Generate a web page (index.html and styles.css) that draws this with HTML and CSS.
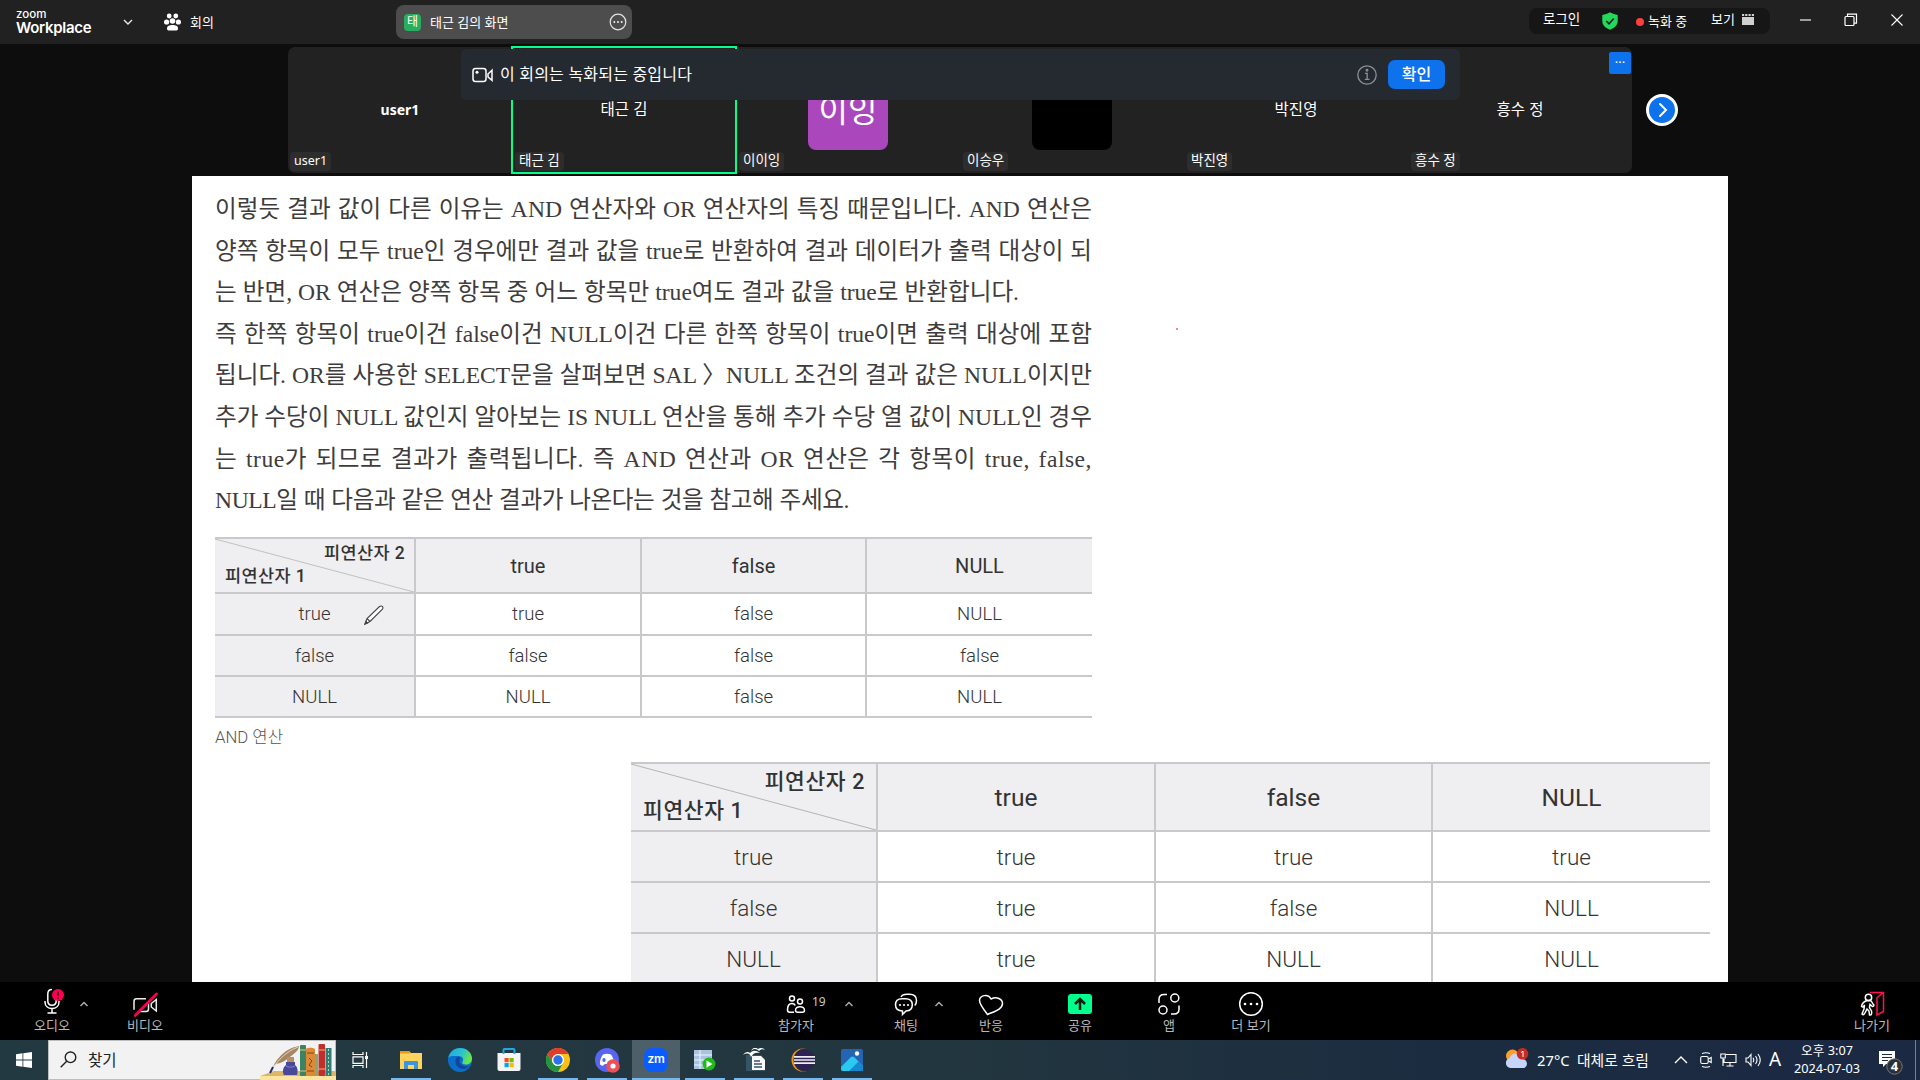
FILE: index.html
```html
<!DOCTYPE html>
<html lang="ko">
<head>
<meta charset="utf-8">
<title>Zoom Workplace</title>
<link rel="stylesheet" href="styles.css">
</head>
<body>
<header class="topbar">
  <div class="logo"><span class="logo-zoom">zoom</span><span class="logo-work">Workplace</span></div>
  <svg class="top-chev" width="10" height="6" viewBox="0 0 10 6" fill="none" stroke="#e8e8e8" stroke-width="1.4"><path d="M1 1l4 4 4-4"/></svg>
  <svg class="top-people" width="17" height="18" viewBox="0 0 17 18" fill="#fff"><circle cx="5.2" cy="3" r="2.4"/><circle cx="11.8" cy="3" r="2.4"/><circle cx="2.6" cy="9" r="2.6"/><circle cx="14.4" cy="9" r="2.6"/><circle cx="8.5" cy="8" r="2.8"/><path d="M3 15.500c0-2.700 2.500-3.500 5.500-3.500s5.500.8 5.500 3.500c0 1.500-.8 2-2 2h-7c-1.200 0-2-.5-2-2z"/></svg>
  <span class="top-meet">회의</span>
  <div class="share-tab">
    <span class="share-badge">태</span><span class="share-name">태근 김의 화면</span>
    <svg width="18" height="18" viewBox="0 0 18 18" fill="none" stroke="#e4e4e4" stroke-width="1.200"><circle cx="9" cy="9" r="7.800"/><g fill="#eee" stroke="none"><circle cx="5.300" cy="9" r="1"/><circle cx="9" cy="9" r="1"/><circle cx="12.700" cy="9" r="1"/></g></svg>
  </div>
  <div class="status">
    <span class="st-login">로그인</span>
    <svg class="st-shield" width="16" height="18" viewBox="0 0 16 18"><path d="M8 .3c2.500 1.700 5 2.400 7.700 2.600v6.300c0 4-3.500 7-7.700 8.500C3.800 16.200.3 13.200.3 9.200V2.900C3 2.700 5.500 2 8 .3z" fill="#23d959"/><path d="M4.300 9l2.700 2.800L11.800 6.500" fill="none" stroke="#123" stroke-width="1.700"/></svg>
    <i class="rec-dot"></i><span class="st-rec">녹화 중</span>
    <span class="st-view">보기</span>
    <svg class="st-grid" width="12" height="11" viewBox="0 0 12 11" fill="#d0d0d0"><path d="M0 3h12v8H0zM0 0h2.200v2H0zM3.200 0h2.200v2H3.200zM6.500 0h2.200v2H6.500zM9.800 0H12v2H9.800z"/></svg>
  </div>
  <svg class="win-min" width="12" height="12" viewBox="0 0 12 12"><path d="M0 6h11" stroke="#c8c8c8" stroke-width="1.500"/></svg>
  <svg class="win-max" width="14" height="14" viewBox="0 0 14 14" fill="none" stroke="#fff" stroke-width="1.200"><rect x="1" y="3.500" width="9" height="9" rx="1"/><path d="M3.500 3.500V1.200h9v9H10"/></svg>
  <svg class="win-close" width="12" height="12" viewBox="0 0 12 12"><path d="M.5.500l11 11M11.500.500l-11 11" stroke="#fff" stroke-width="1.100"/></svg>
</header>

<section class="gallery">
  <div class="tiles">
    <div class="tile"><b>user1</b><span class="tag">user1</span></div>
    <div class="tile active"><span>태근 김</span><span class="tag">태근 김</span></div>
    <div class="tile"><div class="avatar purple">이잉</div><span class="tag">이이잉</span></div>
    <div class="tile"><div class="avatar black"></div><span class="tag">이승우</span></div>
    <div class="tile"><span>박진영</span><span class="tag">박진영</span></div>
    <div class="tile"><span>흥수 정</span><span class="tag">흥수 정</span><span class="tile-more">···</span></div>
  </div>
  <div class="next"><svg width="14" height="18" viewBox="0 0 14 18" fill="none" stroke="#fff" stroke-width="2" stroke-linecap="round"><path d="M5 3l6 6-6 6"/></svg></div>
  <div class="banner">
    <svg width="21" height="16" viewBox="0 0 21 16" fill="none" stroke="#fff" stroke-width="1.500"><rect x="1" y="1.500" width="13" height="13" rx="2.500"/><circle cx="5" cy="5.300" r="1.500" fill="#fff" stroke="none"/><path d="M16 7l4-3.700v10L16 10z"/></svg>
    <span class="banner-text">이 회의는 녹화되는 중입니다</span>
    <svg class="info" width="20" height="20" viewBox="0 0 20 20" fill="none" stroke="#8b8f95" stroke-width="1.300"><circle cx="10" cy="10" r="9.200"/><path d="M8 8.300h2.200v6M7.800 14.400h4.700"/><circle cx="10" cy="5.300" r=".8" fill="#8b8f95"/></svg>
    <span class="ok">확인</span>
  </div>
</section>

<main class="doc">
  <div class="para">
    <p>이렇듯 결과 값이 다른 이유는 AND 연산자와 OR 연산자의 특징 때문입니다. AND 연산은</p>
    <p>양쪽 항목이 모두 true인 경우에만 결과 값을 true로 반환하여 결과 데이터가 출력 대상이 되</p>
    <p class="w3">는 반면, OR 연산은 양쪽 항목 중 어느 항목만 true여도 결과 값을 true로 반환합니다.</p>
    <p>즉 한쪽 항목이 true이건 false이건 NULL이건 다른 한쪽 항목이 true이면 출력 대상에 포함</p>
    <p>됩니다. OR를 사용한 SELECT문을 살펴보면 SAL 〉NULL 조건의 결과 값은 NULL이지만</p>
    <p>추가 수당이 NULL 값인지 알아보는 IS NULL 연산을 통해 추가 수당 열 값이 NULL인 경우</p>
    <p class="w7">는 true가 되므로 결과가 출력됩니다. 즉 AND 연산과 OR 연산은 각 항목이 true, false,</p>
    <p class="w8">NULL일 때 다음과 같은 연산 결과가 나온다는 것을 참고해 주세요.</p>
  </div>
  <div class="truth t1">
    <div class="corner"><svg viewBox="0 0 200 54" preserveAspectRatio="none"><path d="M0 0L200 54" stroke="#bfbfc1" stroke-width="1"/></svg><span class="op2">피연산자 2</span><span class="op1">피연산자 1</span></div>
    <div class="h">true</div><div class="h">false</div><div class="h">NULL</div>
    <div class="r">true</div><div>true</div><div>false</div><div>NULL</div>
    <div class="r">false</div><div>false</div><div>false</div><div>false</div>
    <div class="r">NULL</div><div>NULL</div><div>false</div><div>NULL</div>
  </div>
  <div class="caption">AND 연산</div>
  <div class="truth t2">
    <div class="corner"><svg viewBox="0 0 246 68" preserveAspectRatio="none"><path d="M0 0L246 68" stroke="#b2b2b4" stroke-width="1"/></svg><span class="op2">피연산자 2</span><span class="op1">피연산자 1</span></div>
    <div class="h">true</div><div class="h">false</div><div class="h">NULL</div>
    <div class="r">true</div><div>true</div><div>true</div><div>true</div>
    <div class="r">false</div><div>true</div><div>false</div><div>NULL</div>
    <div class="r">NULL</div><div>true</div><div>NULL</div><div>NULL</div>
  </div>
  <svg class="pencil" width="20" height="20" viewBox="0 0 20 20" fill="#fff" stroke="#444" stroke-width="1.100"><path d="M1 19l2-5.500L15.500 1.500q2-1 3 .2t-.3 2.800L6 16.500zM3 13.500l3 3"/><path d="M1 19l1-2.500 1.500 1.500z" fill="#333"/></svg>
  <i class="laser"></i>
</main>

<nav class="toolbar">
  <div class="tool audio"><svg width="24" height="28" viewBox="0 0 24 28" fill="none" stroke="#fff" stroke-width="1.500"><path d="M12 2.500c-3 0-4.200 2-4.200 4.500v7c0 2.500 1.700 4.200 4.200 4.200s4.200-1.700 4.200-4.200v-2M5 14v1c0 4 3 6.500 7 6.500s7-2.500 7-6.500v-1M12 21.500V26M7.500 26h9"/><circle cx="18" cy="8" r="6" fill="#ff0050" stroke="none"/><path d="M18 4.500v4.500M18 10.300v1.700" stroke="#400018" stroke-width="1.700"/></svg><span>오디오</span></div>
  <svg class="chev" width="24" height="8" viewBox="0 0 24 8" fill="none" stroke="#aaa" stroke-width="1.500"><path d="M8.500 6L12 2.500 15.500 6"/></svg>
  <div class="tool video"><svg width="26" height="28" viewBox="0 0 26 28" fill="none" stroke="#eee" stroke-width="1.500"><path d="M14 8.800H4.500a2.500 2.500 0 0 0-2.500 2.500v8.500M7.500 21.500H14a2.500 2.500 0 0 0 2.500-2.500v-6.500M24.300 9.500v11.500l-5-4v-3.500z"/><path d="M3.200 25.500L24.500 4" stroke="#ff0050" stroke-width="2.600" stroke-linecap="round"/></svg><span>비디오</span></div>

  <div class="tool people"><svg width="24" height="28" viewBox="0 0 24 28" fill="none" stroke="#fff" stroke-width="1.500"><circle cx="8" cy="8.500" r="2.500"/><circle cx="16" cy="11.500" r="2.500"/><path d="M10 22.200H5.500C4 22.200 3.500 21.500 3.500 20c0-4 1.500-6.500 4.500-6.500 1.700 0 2.700.8 3.300 2"/><path d="M13.500 22.200c-1.500 0-2-.7-2-2 0-2 2-3.500 4.500-3.500s4.500 1.500 4.500 3.500c0 1.300-.5 2-2 2z"/></svg><em>19</em><span>참가자</span></div>
  <svg class="chev c2" width="24" height="8" viewBox="0 0 24 8" fill="none" stroke="#aaa" stroke-width="1.500"><path d="M8.500 6L12 2.500 15.500 6"/></svg>
  <div class="tool chat"><svg width="26" height="28" viewBox="0 0 26 28" fill="none" stroke="#fff" stroke-width="1.500"><path d="M8 7c1-2 3-2.800 6-2.800h2.500c4.500 0 7 2.300 7 6.300 0 2.300-.5 4-1.800 5"/><path d="M9 8.800h3.500c4.500 0 6.800 2.200 6.800 6s-2.300 6-6.300 6.200L9.500 24.500V21C5 21 2.500 18.500 2.500 14.800S4.700 8.800 9 8.800z"/><g fill="#fff" stroke="none"><circle cx="7" cy="15" r="1.100"/><circle cx="11" cy="15" r="1.100"/><circle cx="15" cy="15" r="1.100"/></g></svg><span>채팅</span></div>
  <svg class="chev c3" width="24" height="8" viewBox="0 0 24 8" fill="none" stroke="#aaa" stroke-width="1.500"><path d="M8.500 6L12 2.500 15.500 6"/></svg>
  <div class="tool react"><svg width="26" height="28" viewBox="0 0 26 28" fill="none" stroke="#fff" stroke-width="1.500"><path d="M9.500 24.500C4.500 18 1.500 14 1.500 10.500c0-5 8.500-7.500 11.500-1.500 5.500-3 11.500 0 11.500 4.500 0 5.500-7 7.500-15 11z" stroke-linejoin="round"/></svg><span>반응</span></div>
  <div class="tool share"><svg width="24" height="28" viewBox="0 0 24 28"><rect y="4" width="24" height="20" rx="3" fill="#00ff8c"/><path d="M12 20V9.500M7 14l5-5 5 5" fill="none" stroke="#00180d" stroke-width="2.500"/></svg><span>공유</span></div>
  <div class="tool apps"><svg width="24" height="28" viewBox="0 0 24 28" fill="none" stroke="#fff" stroke-width="1.500"><circle cx="17.800" cy="8" r="4"/><circle cx="6" cy="20" r="4"/><path d="M2 13V9.500c0-3 2-5 5-5h3M22 15.500V19c0 3-2 5-5 5h-3"/></svg><span>앱</span></div>
  <div class="tool more"><svg width="26" height="28" viewBox="0 0 26 28" fill="none" stroke="#fff" stroke-width="1.500"><circle cx="13" cy="14" r="11.300"/><g fill="#fff" stroke="none"><circle cx="7" cy="14" r="1.300"/><circle cx="13" cy="14" r="1.300"/><circle cx="19" cy="14" r="1.300"/></g></svg><span>더 보기</span></div>

  <div class="tool leave"><svg width="26" height="28" viewBox="0 0 26 28" fill="none" stroke="#fff" stroke-width="1.500"><circle cx="9.500" cy="7.500" r="3.200"/><path d="M8 10.500c-3 1-5 3-5.500 6 1.500 1 2 0 3-1.500L5 19l-2 5c1.500 1.500 2.500 0 3.500-2L8 19l2 2 .5 4c2 .5 2.500-1 2-4l-2-3.500.5-3 2.500 2c1.500 0 2-1.500.5-2.500-1-2-1.500-3-3-3.800z"/><path d="M11 2.500h13.500v19L18 25V7.500l6.500-5M18 7.500V25" stroke="#ff1050"/></svg><span>나가기</span></div>
</nav>

<footer class="taskbar">
  <div class="start"><svg width="16" height="16" viewBox="0 0 16 16" fill="#fff"><path d="M0 2.200L6.500 1.300v6.300H0zM7.300 1.200L16 0v7.600H7.300zM0 8.400h6.500v6.300L0 13.800zM7.300 8.400H16V16l-8.700-1.200z"/></svg></div>
  <div class="search">
    <svg class="glass" width="17" height="17" viewBox="0 0 17 17" fill="none" stroke="#222" stroke-width="1.400"><circle cx="10.500" cy="6.300" r="5.300"/><path d="M6.700 10.200L.7 16.200"/></svg>
    <span>찾기</span>
    <svg class="art" width="76" height="36" viewBox="0 0 76 36"><path d="M0 32l14-5h62v5z" fill="#dcb765"/><path d="M0 32h76v4H0z" fill="#fde5a0"/>
      <path d="M10 29C14 19 22 5 39 2c0 6-9 10-13 14-4 3-8 3-12 5z" fill="#a58768"/><path d="M10 29C16 18 25 8 38 3" stroke="#ead2ae" fill="none"/><path d="M10 29l3-6" stroke="#2b2c65" stroke-width="2"/>
      <rect x="27" y="13" width="7" height="6" fill="#be8f61"/><path d="M26 18h9v3c3 2 3 7 2 10H24c-2-3-1-8 2-10z" fill="#484a99"/><path d="M26 22c4 2 6 1 9 0" stroke="#8282c4" fill="none"/>
      <rect x="40" y="1" width="6" height="31" rx="1" fill="#3b8463"/><path d="M40 6h6M40 27h6" stroke="#ddc875"/><path d="M46 5c3-2 7-1 9 0v27h-9z" fill="#dd8935"/><path d="M47 9h7M47 27h7M49 14l3 3-3 4 3 2" stroke="#814419" fill="none"/><rect x="55" y="10" width="3" height="22" fill="#84aa74"/><rect x="58.500" width="6.500" height="32" rx="1" fill="#c22e2d"/><path d="M59 6h6M59 25h6" stroke="#f0b766"/><rect x="65.500" y="4" width="6" height="28" fill="#2c7f78"/><path d="M68.500 5v26" stroke="#b4d2b2" stroke-dasharray="2 2"/></svg>
  </div>
  <div class="task"><svg width="16" height="16" viewBox="0 0 16 16" fill="none" stroke="#fff" stroke-width="1.200"><path d="M1 0v2.500h10V0M1 16v-2.500h10V16M1 4.800h10v6.500H1zM14.500 0v16"/><rect x="13" y="4" width="3" height="3" fill="#fff" stroke="none"/></svg></div>
  <div class="apps-row">
    <div class="task on"><svg width="22" height="20" viewBox="0 0 22 20"><path d="M0 1h9l2 2h11v16H0z" fill="#ffd45c"/><path d="M0 1h9l1.500 2.500H0z" fill="#e49b10"/><path d="M4 19v-7q0-1 1-1h12q1 0 1 1v7h-4v-4H8v4z" fill="#3b96dd"/></svg></div>
    <div class="task"><svg width="24" height="24" viewBox="0 0 24 24"><defs><linearGradient id="eg" x1="0" y1="0" x2="1" y2=".4"><stop stop-color="#23a5ec"/><stop offset=".6" stop-color="#29c4cc"/><stop offset="1" stop-color="#6be34e"/></linearGradient></defs><circle cx="12" cy="12" r="12" fill="#0b6fca"/><path d="M.3 10C1.500 4 6.200 0 12 0c7 0 12 5 12 10.500 0 4-3 6-6 6-3.200 0-4.500-1.200-3.500-2.500 1.700-2.500.2-6-4-6C6 8 1.500 7.500.3 10z" fill="url(#eg)"/><path d="M9 9c-4 5 0 12 6 12 3 0 6-2 7-3.500-3 1.500-6 1-8-.5-3-2-3-5-1.500-7C11.500 9 10 8.500 9 9z" fill="#12469e"/></svg></div>
    <div class="task"><svg width="24" height="24" viewBox="0 0 24 24"><path d="M.5 5h23v16q0 2-2 2h-19q-2 0-2-2z" fill="#f4f4f4"/><path d="M6.500 6V2q0-1 1-1h9q1 0 1 1v4" fill="none" stroke="#20a7e8" stroke-width="2"/><path fill="#f25022" d="M7.500 10h4.200v4.200H7.500z"/><path fill="#7fba00" d="M12.500 10h4.200v4.200h-4.200z"/><path fill="#00a4ef" d="M7.500 15h4.200v4.200H7.500z"/><path fill="#ffb900" d="M12.500 15h4.200v4.200h-4.200z"/></svg></div>
    <div class="task on"><svg width="24" height="24" viewBox="0 0 24 24"><circle cx="12" cy="12" r="12" fill="#fbc116"/><path d="M1.600 6A12 12 0 0 1 22.400 6H12a6 6 0 0 0-5.200 9z" fill="#e33b2e"/><path d="M1.600 6A12 12 0 0 0 12 24l5.200-9a6 6 0 0 1-10.400 0z" fill="#229342"/><circle cx="12" cy="12" r="6" fill="#fff"/><circle cx="12" cy="12" r="4.700" fill="#2c72e8"/></svg></div>
    <div class="task on"><svg width="25" height="25" viewBox="0 0 25 25"><circle cx="12" cy="12" r="12" fill="#5865f2"/><path d="M8 6.500c3-1 5-1 8 0 2 3 3.500 6 3 10-4 3-3 0-5-.5h-4c-2 .5-1 3.500-5 .5-.5-4 1-7 3-10z" fill="#fff"/><ellipse cx="9" cy="12" rx="1.700" ry="2" fill="#5865f2"/><circle cx="18" cy="18" r="6.800" fill="#ed5057"/><circle cx="18" cy="18" r="2.600" fill="#fff"/></svg></div>
    <div class="task on current"><span class="zm">zm</span></div>
    <div class="task on"><svg width="22" height="24" viewBox="0 0 22 24"><path d="M0 2h18v19H0z" fill="#a9c3e0"/><path d="M0 7h18M0 12h18M0 17h18M6 2v19" stroke="#eef6ff"/><circle cx="15" cy="16" r="6.500" fill="#1dbd18"/><path d="M12.500 12.300v7.400l6-3.700z" fill="#fff"/></svg></div>
    <div class="task on"><svg width="24" height="24" viewBox="0 0 24 24"><path d="M4 7h15l4 4v12H4z" fill="#345563"/><path d="M10 8h9l4 4v10H10z" fill="#fafafa"/><path d="M12 13h6M12 16h8M12 19h8" stroke="#34566c" stroke-width="1.500"/><path d="M1 7c5-3 7-1 8 2 2-4 5-5 9-4-4-3-7-3-10 0C6 3 3 4 1 7zM9 3c3-3 6-2 8 0 2-2 4-2 6-1-3-3-5-2-7-1-2-2-5-2-7 2z" fill="#fff"/></svg></div>
    <div class="task on"><svg width="25" height="24" viewBox="0 0 25 24"><circle cx="12" cy="12" r="11.500" fill="#f59218"/><circle cx="14" cy="12" r="11.500" fill="#22363f"/><circle cx="13.500" cy="12" r="10.500" fill="#2e2255"/><path d="M3 8.800h21M3 12h21M3 15.200h21" stroke="#eee" stroke-width="1.700"/></svg></div>
    <div class="task on"><svg width="22" height="22" viewBox="0 0 22 22"><rect width="22" height="22" rx="2" fill="#2464b2"/><path d="M0 18L10 8q1.500-1 3 0l9 9v3q0 2-2 2H2q-2 0-2-2z" fill="#2ac9ed"/><path d="M8 22L18 12l4 5v5z" fill="#1489d0"/><circle cx="16" cy="4.500" r="2.200" fill="#fff"/></svg></div>
  </div>
  <div class="tray">
    <svg class="weather" width="24" height="21" viewBox="0 0 24 21"><circle cx="7.500" cy="8" r="6.500" fill="#fb9f2d"/><path d="M5 20a5 5 0 0 1-.5-9.700A7 7 0 0 1 18 11a4.700 4.700 0 0 1 1 9z" fill="#c8d5fb"/><circle cx="17.500" cy="5.800" r="5.800" fill="#c62d22"/><path d="M16 4.500l2-1.300V9" fill="none" stroke="#fff"/></svg>
    <span class="temp">27°C&ensp;대체로 흐림</span>
    <svg class="t-up" width="14" height="8" viewBox="0 0 14 8" fill="none" stroke="#fff" stroke-width="1.400"><path d="M1 7l6-6 6 6"/></svg>
    <svg class="t-cam" width="12" height="16" viewBox="0 0 12 16" fill="none" stroke="#fff" stroke-width="1.100"><rect x=".7" y="4.500" width="7.500" height="7" rx="1.500"/><path d="M8.500 7l2.700-1.500v5L8.500 9M2 1.500q4-1.500 8 0M2 14.500q4 1.500 8 0"/></svg>
    <svg class="t-net" width="17" height="14" viewBox="0 0 17 14" fill="none" stroke="#fff" stroke-width="1.100"><path d="M6 1.500h10v8H4V6M10 9.500v3.500M6.500 13h7M.8 1h4.500v4H.8zM3 5v8"/></svg>
    <svg class="t-vol" width="17" height="14" viewBox="0 0 17 14" fill="none" stroke="#fff" stroke-width="1.100"><path d="M1 5h2l3-3.500v11L3 9H1zM8 4.800q1.500 2.200 0 4.400M10.500 3q3 4 0 8M13 1q4.500 6 0 12"/></svg>
    <span class="t-a">A</span>
    <div class="clock"><span>오후 3:07</span><span>2024-07-03</span></div>
    <svg class="notif" width="26" height="26" viewBox="0 0 26 26"><path d="M1 2h16v13H8l-3 3v-3H1z" fill="#fff"/><path d="M4 5.500h10M4 8.500h10M4 11.500h6" stroke="#1b2b40"/><circle cx="16.500" cy="17.500" r="7.700" fill="#2b3038" stroke="#777"/><text x="16.500" y="22" text-anchor="middle" class="count">4</text></svg>
    <i class="peek"></i>
  </div>
</footer>
</body>
</html>
```
FILE: styles.css
```css
* { box-sizing: border-box; }
body { margin: 0; width: 1920px; height: 1080px; overflow: hidden; background: #0d0d0d; color: #fff; display: flex; flex-direction: column; font-family: "Noto Sans", "Noto Sans CJK KR", sans-serif; font-size: 13px; }
svg { display: block; flex: none; }
span { white-space: nowrap; }
i, em { font-style: normal; }

.topbar { height: 44px; flex: none; background: #212121; display: flex; align-items: center; }
.logo { width: 107px; padding: 0 0 1px 16px; display: flex; flex-direction: column; font-family: Inter, sans-serif; }
.logo-zoom { font-size: 11.500px; line-height: 12px; font-weight: 500; }
.logo-work { font-size: 15px; line-height: 16px; font-weight: 600; letter-spacing: -.3px; }
.top-chev { margin-left: 16px; }
.top-people { margin-left: 31px; }
.top-meet { margin: -2px 0 0 9px; width: 24px; }
.share-tab { margin-left: 182px; width: 236px; height: 34px; border-radius: 8px; background: #4d4d4d; display: flex; align-items: center; padding: 0 5px 0 8px; }
.share-badge { width: 17px; height: 17px; border-radius: 4px; background: #27ae60; font-size: 12px; line-height: 16px; text-align: center; }
.share-name { flex: 1; margin: -2px 0 0 9px; font-size: 13px; }
.status { margin-left: 897px; width: 241px; height: 26px; border-radius: 8px; background: #161616; display: flex; align-items: center; padding-left: 14px; margin-top: -2px; }
.st-login { width: 40px; font-size: 13.500px; margin-top: -6px; }
.st-shield { margin-left: 19px; margin-top: -1px; }
.rec-dot { width: 8px; height: 8px; border-radius: 50%; background: #ff3f3f; margin: 2px 4px 0 18px; }
.st-rec { width: 40px; margin-top: -2px; }
.st-view { margin: -5px 0 0 23px; width: 24px; }
.st-grid { margin-left: 7px; margin-top: -3px; }
.win-min { margin: -4px 0 0 30px; }
.win-max { margin: -4px 0 0 32px; }
.win-close { margin: -4px 0 0 33px; }

.gallery { height: 132px; flex: none; padding: 3px 0 0 288px; display: flex; position: relative; }
.tiles { display: grid; grid-template-columns: repeat(6, 224px); height: 126px; background: #222; border-radius: 7px; }
.tile { position: relative; display: flex; align-items: center; justify-content: center; font-size: 15.500px; }
.tile b { font-size: 14px; margin-top: -2px; }
.tile > span:first-child { margin-top: -4px; }
.active::after { content: ""; position: absolute; inset: -1px; border: 2px solid #00ff8c; }
.tag { position: absolute; left: 3px; bottom: 2px; height: 19px; padding: 0 4px; border-radius: 4px; background: #2d2d2d; font-size: 13.500px; line-height: 16px; }
.tile:first-child .tag { font-size: 12.500px; left: 2px; line-height: 18px; }
.avatar { width: 80px; height: 80px; border-radius: 8px; font-size: 32px; text-align: center; line-height: 80px; }
.purple { background: #ab47bc; }
.black { background: #000; }
.tile-more { position: absolute; right: 1px; top: 5px; width: 22px; height: 22px; border-radius: 2px; background: #0e72ed; text-align: center; line-height: 21px; font-size: 13px; }
.next { margin: 47px 0 0 14px; width: 32px; height: 32px; border-radius: 50%; border: 3px solid #fff; background: #0e72ed; display: flex; align-items: center; justify-content: center; }
.banner { position: absolute; left: 461px; top: 5px; width: 999px; height: 51px; border-radius: 5px; background: #252a31; display: flex; align-items: center; padding: 0 15px 0 11px; }
.banner-text { flex: 1; margin-left: 7px; font-size: 16px; letter-spacing: .2px; margin-top: -3px; }
.ok { margin-left: 11px; width: 57px; height: 29px; border-radius: 7px; background: #0e72ed; font-size: 16px; font-weight: 500; line-height: 28px; text-align: center; }

.doc { position: relative; width: 1536px; height: 806px; flex: none; margin-left: 192px; padding: 13px 0 0 23px; background: #fff; color: #403c3c; overflow: hidden; }
.para { width: 877px; height: 348px; font: 400 23.600px/41.600px "Liberation Serif", "Noto Sans CJK KR", serif; }
.para p { margin: 0; height: 41.600px; white-space: nowrap; text-align-last: justify; }
.para .w3 { width: 804px; }
.para .w7 { letter-spacing: .5px; }
.para .w8 { width: 634px; letter-spacing: -.4px; }
.truth { display: grid; font-family: Roboto, "Noto Sans CJK KR", sans-serif; font-weight: 300; color: #333; border-top: 2px solid #c9c9cb; }
.truth > div { display: flex; align-items: center; justify-content: center; border-bottom: 2px solid #c9c9cb; border-right: 2px solid #c9c9cb; }
.truth > div:nth-child(4n) { border-right: 0; }
.truth .h, .truth .r, .truth .corner { background: #efeef0; }
.truth .h { font-weight: 400; }
.truth .corner { position: relative; font-weight: 500; }
.corner svg { position: absolute; inset: 0; width: 100%; height: 100%; }
.op1, .op2 { position: absolute; }
.t1 { width: 877px; grid-template-columns: 201px 226px 225px 225px; grid-template-rows: 55px 42px 41px 41px; font-size: 18.500px; }
.t1 .h { font-size: 20px; }
.t1 .corner { font-size: 17.500px; line-height: 20px; letter-spacing: .4px; }
.t1 .op2 { right: 9px; top: 4px; }
.t1 .op1 { left: 10px; top: 27px; }
.caption { height: 44px; padding-top: 7px; font: 300 16.700px/26px Roboto, "Noto Sans CJK KR", sans-serif; color: #555; }
.t2 { margin-left: 416px; width: 1079px; grid-template-columns: 247px 278px 277px 277px; grid-template-rows: 68px 51px 51px 51px; font-size: 22.500px; }
.t2 .h { font-size: 24.500px; }
.t2 .corner { font-size: 21.500px; line-height: 24px; letter-spacing: .6px; }
.t2 .op2 { right: 11px; top: 6px; }
.t2 .op1 { left: 12px; top: 35px; }
.pencil { position: absolute; left: 172px; top: 429px; }
.laser { position: absolute; left: 984px; top: 152px; width: 2px; height: 2px; border-radius: 50%; background: #f06060; }

.toolbar { height: 58px; flex: none; background: #000; display: flex; }
.tool { position: relative; width: 60px; padding-top: 8px; display: flex; flex-direction: column; align-items: center; }
.tool span { font-size: 13px; line-height: 15px; color: #b8b8b8; }
.tool em { position: absolute; left: 46px; top: 10px; font-size: 12px; line-height: 20px; color: #c8c8c8; }
.chev { margin-top: 18px; }
.audio { width: 40px; margin-left: 32px; padding-top: 5px; }
.audio svg { margin-bottom: 3px; }
.video { margin-left: 19px; }
.people { margin-left: 591px; }
.c2 { margin-left: 11px; }
.chat { width: 40px; margin-left: 25px; }
.c3 { margin-left: 1px; }
.react { margin-left: 10px; }
.share, .apps { margin-left: 29px; }
.more { margin-left: 22px; }
.leave { margin-left: auto; margin-right: 18px; }

.taskbar { height: 40px; flex: none; background: linear-gradient(90deg, #233941 0%, #22363f 50%, #1b2c40 75%, #1b2943 100%); display: flex; }
.start { width: 48px; display: flex; align-items: center; justify-content: center; }
.search { width: 288px; background: #f2f2f2; border: 1px solid #bdbdbd; color: #222; display: flex; align-items: center; padding-left: 11px; }
.search span { margin: -2px 0 0 11px; flex: 1; font-size: 15.500px; }
.glass { margin-top: -2px; }
.art { align-self: flex-end; margin-bottom: -1px; margin-right: -1px; }
.task { width: 48px; display: flex; align-items: center; justify-content: center; position: relative; }
.apps-row { margin-left: 3px; display: flex; gap: 1px; }
.on::after { content: ""; position: absolute; left: 4px; right: 4px; bottom: 0; height: 2px; background: #76b9ed; }
.current { background: #4d6069; }
.current::after { left: 0; right: 0; }
.zm { width: 24px; height: 24px; border-radius: 8px; background: #0b5cff; font: 600 12px/22px Inter, sans-serif; text-align: center; letter-spacing: -.3px; }
.tray { margin-left: auto; width: 415px; display: flex; align-items: center; }
.weather { margin-top: -3px; }
.temp { margin: -2px 0 0 8px; width: 113px; font-size: 14.800px; }
.t-up { margin-left: 24px; }
.t-cam { margin-left: 12px; }
.t-net { margin-left: 8px; }
.t-vol { margin-left: 8px; }
.t-a { margin: -2px 0 0 7px; width: 13px; font-size: 19px; }
.clock { margin: -2px 0 0 7px; width: 76px; font-size: 12.700px; display: flex; flex-direction: column; align-items: center; line-height: 18px; }
.notif { margin-left: 13px; margin-top: 3px; }
.count { font: 700 13px "Noto Sans", sans-serif; fill: #fff; }
.peek { width: 1px; height: 40px; background: #78808d; margin-left: auto; margin-right: 4px; }
```
